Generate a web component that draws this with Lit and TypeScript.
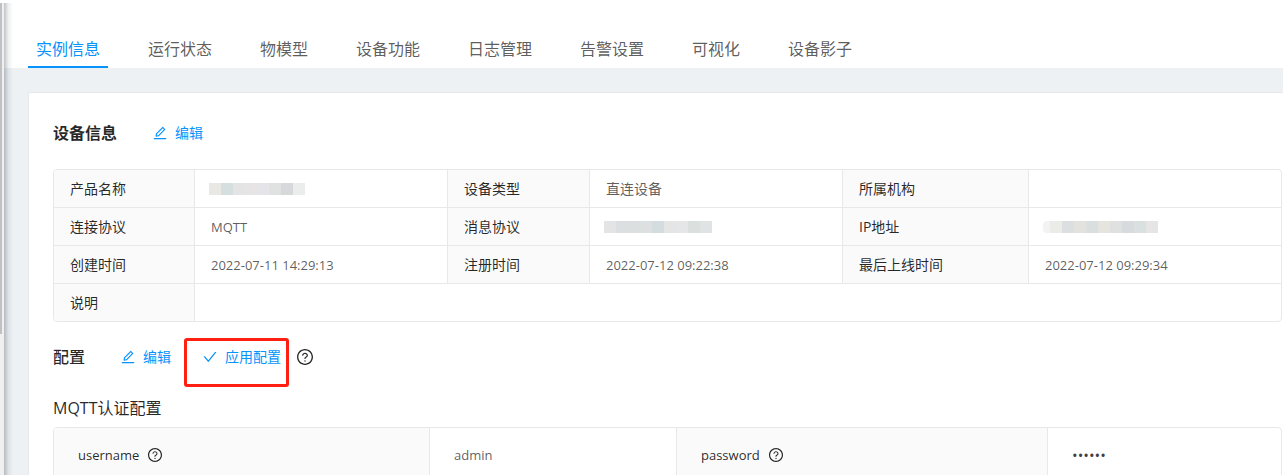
import { LitElement, html, css, svg } from "lit";
import { customElement, property } from "lit/decorators.js";

const ICONS: Record<string, string[]> = {
  edit: [
    "M257.7 752c2 0 4-.2 6-.5L431.9 722c2-.4 3.9-1.3 5.3-2.8l423.9-423.9a9.96 9.96 0 000-14.1L694.9 114.9c-1.9-1.9-4.4-2.9-7.1-2.9s-5.2 1-7.1 2.9L256.8 538.8c-1.5 1.5-2.4 3.3-2.8 5.3l-29.5 168.2a33.5 33.5 0 009.4 29.8c6.6 6.4 14.9 9.9 23.8 9.9zm67.4-174.4L687.8 215l73.3 73.3-362.7 362.6-88.9 15.7 15.6-89zM880 836H144c-17.7 0-32 14.3-32 32v36c0 4.4 3.6 8 8 8h784c4.4 0 8-3.6 8-8v-36c0-17.7-14.3-32-32-32z",
  ],
  check: [
    "M912 190h-69.9c-9.8 0-19.1 4.5-25.1 12.2L404.7 724.5 207 474a32 32 0 00-25.1-12.2H112c-6.3 0-9.8 7.2-6 12.2l273.9 347c12.8 16.2 37.4 16.2 50.3 0l488.4-618.9c3.8-4.9.3-12.1-6.1-12.1z",
  ],
  question: [
    "M512 64C264.6 64 64 264.6 64 512s200.6 448 448 448 448-200.6 448-448S759.4 64 512 64zm0 820c-205.4 0-372-166.6-372-372s166.6-372 372-372 372 166.6 372 372-166.6 372-372 372z",
    "M623.6 316.7C593.6 290.4 554 276 512 276s-81.6 14.5-111.6 40.7C369.2 344 352 380.7 352 420v7.6c0 4.4 3.6 8 8 8h48c4.4 0 8-3.6 8-8V420c0-44.1 43.1-80 96-80s96 35.9 96 80c0 31.1-22 59.6-56.1 72.7-21.2 8.1-39.2 22.3-52.1 40.9-13.1 19-19.9 41.8-19.9 64.9V620c0 4.4 3.6 8 8 8h48c4.4 0 8-3.6 8-8v-22.7a48.3 48.3 0 0130.9-44.8c59-22.7 97.1-74.7 97.1-132.5.1-39.3-17.1-76-48.3-103.3zM472 732a40 40 0 1080 0 40 40 0 10-80 0z",
  ],
};

@customElement("ui-icon")
export class UiIcon extends LitElement {
  @property() name = "edit";

  static styles = css`
    :host {
      display: inline-flex;
      width: 1em;
      height: 1em;
      flex: none;
    }
    .glyph {
      width: 100%;
      height: 100%;
      fill: currentColor;
    }
  `;

  render() {
    return html`<svg class="glyph" viewBox="64 64 896 896" aria-hidden="true">
      ${ICONS[this.name].map((d) => svg`<path d=${d}></path>`)}
    </svg>`;
  }
}

/** A hidden value, drawn as a strip of pale blocks. */
@customElement("masked-value")
export class MaskedValue extends LitElement {
  @property({ attribute: false }) colors: string[] = [];

  static styles = css`
    :host {
      display: flex;
      height: 12px;
      margin-left: -2px;
    }
    .block {
      width: 12px;
    }
    :host([clipped]) .block:first-child {
      width: 7px;
      border-radius: 4px 0 0 4px;
    }
  `;

  render() {
    return this.colors.map(
      (c) => html`<span class="block" style="background:${c}"></span>`
    );
  }
}

const TABS = [
  "实例信息",
  "运行状态",
  "物模型",
  "设备功能",
  "日志管理",
  "告警设置",
  "可视化",
  "设备影子",
];

const MASKS: Record<string, string[]> = {
  product: ["#e9e8e5", "#d5dfe0", "#e4e4e4", "#e6e4e5", "#e4e4e9", "#e0e2e1", "#d7d8da", "#ebeded"],
  message: ["#e3e5e4", "#dbdfe2", "#dbdfe0", "#dde0e1", "#d3dddf", "#e5e5e5", "#e4e6e8", "#dae0de", "#e0e3e3"],
  address: ["#f3f3f3", "#ebebe7", "#dbdfe0", "#e3e2df", "#d9dfdf", "#e5e4df", "#dfe1e1", "#d7dbdd", "#dadfe0", "#e5e5e6"],
};

@customElement("app-root")
export class AppRoot extends LitElement {
  static styles = css`
    :host {
      display: block;
      font-family: "Open Sans", "Noto Sans CJK SC", sans-serif;
      font-size: 14px;
      line-height: 22px;
      color: rgba(0, 0, 0, 0.65);
    }
    * {
      box-sizing: border-box;
    }
    .shell {
      display: flex;
      height: 100vh;
      overflow: hidden;
      background: #edf1f4;
    }
    .rail {
      width: 4px;
      flex: none;
      border-top: 3px solid #fff;
      background: #f0f0f0;
    }
    .thumb {
      width: 2px;
      height: 331px;
      background: #c1c1c3;
    }
    .page {
      position: relative;
      flex: 1;
      min-width: 0;
    }
    .edge {
      position: absolute;
      top: 3px;
      bottom: 0;
      left: 0;
      width: 9px;
      background: linear-gradient(90deg, rgba(50, 62, 76, 0.3), rgba(50, 62, 76, 0.08) 50%, rgba(50, 62, 76, 0));
    }
    .tabs {
      display: flex;
      gap: 32px;
      padding: 28px 24px 0;
      background: #fff;
      font-size: 16px;
      line-height: 24px;
    }
    .tab {
      padding: 9px 8px 5px;
      border-bottom: 2px solid transparent;
      color: inherit;
      text-decoration: none;
      white-space: nowrap;
    }
    .tab.active {
      color: #0893fc;
      border-color: #0893fc;
    }
    .card {
      margin: 24px 0 0 24px;
      padding: 24px 1px 24px 24px;
      border: 1px solid #e6e8ea;
      border-right: 0;
      border-radius: 2px 0 0 0;
      background: #fff;
    }
    .section {
      display: flex;
      align-items: center;
      height: 32px;
    }
    .section.first {
      margin-bottom: 20px;
    }
    .section.config {
      margin: 19px 0 23px;
    }
    .title {
      margin: 0 20px 0 0;
      font-size: 16px;
      font-weight: 500;
      line-height: 24px;
      color: rgba(0, 0, 0, 0.85);
    }
    .first .title {
      font-weight: 700;
    }
    .subtitle {
      margin: 0 0 7px;
      font-size: 16px;
      font-weight: 400;
      line-height: 24px;
      color: rgba(0, 0, 0, 0.85);
    }
    .link {
      display: inline-flex;
      align-items: center;
      gap: 8px;
      height: 32px;
      padding: 0 16px;
      border: 0;
      background: none;
      color: #0893fc;
      font: inherit;
    }
    .apply {
      position: relative;
      display: flex;
    }
    .mark {
      position: absolute;
      top: -3px;
      left: -3px;
      right: 8px;
      height: 49px;
      border: 3px solid #ff2012;
      border-radius: 3px;
      pointer-events: none;
    }
    .help {
      display: inline-flex;
      padding: 0;
      border: 0;
      background: none;
      color: rgba(0, 0, 0, 0.85);
      font-size: 16px;
    }
    .help.small {
      font-size: 14px;
    }
    .grid {
      width: 100%;
      table-layout: fixed;
      border-spacing: 0;
      border: 1px solid #e8e8e8;
      border-radius: 4px;
      overflow: hidden;
    }
    .grid th,
    .grid td {
      height: 38px;
      padding: 7px 16px;
      border-right: 1px solid #e8e8e8;
      border-bottom: 1px solid #e8e8e8;
      text-align: left;
      font-weight: 400;
    }
    .grid th {
      background: #fafafa;
      color: rgba(0, 0, 0, 0.85);
    }
    .grid tr > :last-child {
      border-right: 0;
    }
    .grid tr:last-child > * {
      height: 37px;
      border-bottom: 0;
    }
    .grid .latin {
      font-size: 13px;
    }
    .grid .secret {
      color: rgba(0, 0, 0, 0.75);
      font-size: 15px;
    }
    .grid.roomy th,
    .grid.roomy td {
      padding: 16px 24px;
    }
    .label {
      display: flex;
      align-items: center;
      gap: 9px;
    }
    .c1 {
      width: 141px;
    }
    .value {
      width: 253px;
    }
    .c3 {
      width: 142px;
    }
    .c5 {
      width: 186px;
    }
    .w1 {
      width: 376px;
    }
    .w2 {
      width: 247px;
    }
    .w3 {
      width: 371px;
    }
  `;

  render() {
    return html`
      <div class="shell">
        <div class="rail"><div class="thumb"></div></div>
        <main class="page">
          <nav class="tabs">
            ${TABS.map(
              (t, i) => html`<a class="tab ${i === 0 ? "active" : ""}" href="#">${t}</a>`
            )}
          </nav>
          <section class="card">
            <div class="section first">
              <h2 class="title">设备信息</h2>
              <button class="link"><ui-icon name="edit"></ui-icon>编辑</button>
            </div>
            <table class="grid">
              <colgroup>
                <col class="c1" /><col class="value" /><col class="c3" /><col class="value" /><col class="c5" /><col />
              </colgroup>
              <tbody>
                <tr>
                  <th scope="row">产品名称</th>
                  <td><masked-value .colors=${MASKS.product}></masked-value></td>
                  <th scope="row">设备类型</th>
                  <td>直连设备</td>
                  <th scope="row">所属机构</th>
                  <td></td>
                </tr>
                <tr>
                  <th scope="row">连接协议</th>
                  <td class="latin">MQTT</td>
                  <th scope="row">消息协议</th>
                  <td><masked-value .colors=${MASKS.message}></masked-value></td>
                  <th scope="row">IP地址</th>
                  <td><masked-value clipped .colors=${MASKS.address}></masked-value></td>
                </tr>
                <tr>
                  <th scope="row">创建时间</th>
                  <td class="latin">2022-07-11 14:29:13</td>
                  <th scope="row">注册时间</th>
                  <td class="latin">2022-07-12 09:22:38</td>
                  <th scope="row">最后上线时间</th>
                  <td class="latin">2022-07-12 09:29:34</td>
                </tr>
                <tr>
                  <th scope="row">说明</th>
                  <td colspan="5"></td>
                </tr>
              </tbody>
            </table>
            <div class="section config">
              <h2 class="title">配置</h2>
              <button class="link"><ui-icon name="edit"></ui-icon>编辑</button>
              <div class="apply">
                <button class="link"><ui-icon name="check"></ui-icon>应用配置</button>
                <div class="mark"></div>
              </div>
              <button class="help" aria-label="应用配置"><ui-icon name="question"></ui-icon></button>
            </div>
            <h3 class="subtitle">MQTT认证配置</h3>
            <table class="grid roomy">
              <colgroup>
                <col class="w1" /><col class="w2" /><col class="w3" /><col />
              </colgroup>
              <tbody>
                <tr>
                  <th class="latin" scope="row">
                    <div class="label">
                      username
                      <button class="help small" aria-label="username"><ui-icon name="question"></ui-icon></button>
                    </div>
                  </th>
                  <td class="latin">admin</td>
                  <th class="latin" scope="row">
                    <div class="label">
                      password
                      <button class="help small" aria-label="password"><ui-icon name="question"></ui-icon></button>
                    </div>
                  </th>
                  <td class="secret">••••••</td>
                </tr>
              </tbody>
            </table>
          </section>
          <div class="edge"></div>
        </main>
      </div>
    `;
  }
}
